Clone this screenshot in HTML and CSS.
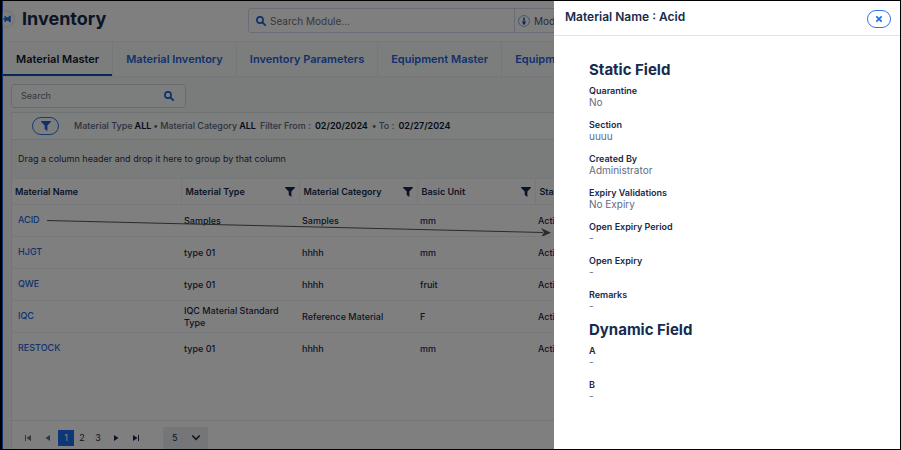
FILE: index.html
```html
<!DOCTYPE html>
<html lang="en">
<head>
<meta charset="utf-8">
<title>Inventory</title>
<link rel="stylesheet" href="styles.css">
</head>
<body>
<svg class="defs" aria-hidden="true">
  <symbol id="funnel" viewBox="0 0 10 10"><path d="M.3 0h9.4q.5.4.1.9L6.400 4.600V10L3.700 8V4.600L.2.9Q-.2.4.3 0z" fill="currentColor"/></symbol>
  <symbol id="search" viewBox="0 0 10 10"><circle cx="4" cy="4" r="3.100" fill="none" stroke="currentColor" stroke-width="1.600"/><path d="M6.400 6.400l2.800 2.800" stroke="currentColor" stroke-width="1.900" stroke-linecap="round"/></symbol>
</svg>
<div class="screen">
  <main class="page">
    <header class="topbar">
      <button class="pin" type="button" aria-label="Pin menu"><svg viewBox="0 0 12 10"><path d="M0 4.400h3V1.400h1.300l.9 1.400h2.600l.7-1.800h2v8h-2l-.7-1.800H5.200l-.9 1.400H3V5.600H0z" fill="currentColor"/></svg></button>
      <h1>Inventory</h1>
      <div class="module-search">
        <label class="module-field"><svg><use href="#search"/></svg><input type="search" placeholder="Search Module..." aria-label="Search Module"></label>
        <button class="module-pick" type="button"><svg viewBox="0 0 12 12"><circle cx="6" cy="6" r="5.400" fill="none" stroke="currentColor" stroke-width=".6" stroke-dasharray="2 .5"/><path d="M5.300 2.500h1.400v2l1 2.500-.8 2.500H5.100L4.300 7l1-2.500z" fill="currentColor"/><path d="M6 5v2" stroke="#fff" stroke-width=".7"/></svg>Module</button>
      </div>
    </header>
    <nav class="tabs">
      <a class="active" href="#master">Material Master</a>
      <a href="#inventory">Material Inventory</a>
      <a href="#parameters">Inventory Parameters</a>
      <a href="#equipment">Equipment Master</a>
      <a href="#equipment-list">Equipment</a>
    </nav>
    <section class="content">
      <label class="search"><input type="search" placeholder="Search" aria-label="Search"><svg><use href="#search"/></svg></label>
      <div class="panel">
        <div class="filters">
          <button class="pill" type="button" aria-label="Filter"><svg><use href="#funnel"/></svg></button>
          <p><span>Material Type</span><b>ALL</b><span>•</span><span>Material Category</span><b>ALL</b><span class="range">Filter From :</span><b class="date">02/20/2024</b><span class="range">•</span><span>To :</span><b class="date">02/27/2024</b></p>
        </div>
        <p class="group">Drag a column header and drop it here to group by that column</p>
        <table>
          <colgroup><col class="c-name"><col class="c-mid"><col class="c-mid"><col class="c-mid"><col></colgroup>
          <thead><tr>
            <th>Material Name</th>
            <th><div>Material Type<svg><use href="#funnel"/></svg></div></th>
            <th><div>Material Category<svg><use href="#funnel"/></svg></div></th>
            <th><div>Basic Unit<svg><use href="#funnel"/></svg></div></th>
            <th>Status</th>
          </tr></thead>
          <tbody>
            <tr><td><a href="#acid">ACID</a></td><td>Samples</td><td>Samples</td><td>mm</td><td>Active</td></tr>
            <tr><td><a href="#hjgt">HJGT</a></td><td>type 01</td><td>hhhh</td><td>mm</td><td>Active</td></tr>
            <tr><td><a href="#qwe">QWE</a></td><td>type 01</td><td>hhhh</td><td>fruit</td><td>Active</td></tr>
            <tr><td><a href="#iqc">IQC</a></td><td>IQC Material Standard Type</td><td>Reference Material</td><td>F</td><td>Active</td></tr>
            <tr><td><a href="#restock">RESTOCK</a></td><td>type 01</td><td>hhhh</td><td>mm</td><td>Active</td></tr>
          </tbody>
        </table>
        <div class="pager">
          <button class="off" type="button" aria-label="First page"><svg viewBox="0 0 8 8"><path d="M1 1h1v6H1zM7 1v6L2.500 4z" fill="currentColor"/></svg></button>
          <button class="off" type="button" aria-label="Previous page"><svg viewBox="0 0 8 8"><path d="M6 1v6L1.500 4z" fill="currentColor"/></svg></button>
          <button class="current" type="button">1</button>
          <button type="button">2</button>
          <button type="button">3</button>
          <button type="button" aria-label="Next page"><svg viewBox="0 0 8 8"><path d="M2 1v6l4.500-3z" fill="currentColor"/></svg></button>
          <button type="button" aria-label="Last page"><svg viewBox="0 0 8 8"><path d="M6 1h1v6H6zM1 1v6l4.500-3z" fill="currentColor"/></svg></button>
          <div class="size"><select aria-label="Rows per page"><option>5</option></select><svg viewBox="0 0 8 6"><path d="M1 1l3 3 3-3" fill="none" stroke="currentColor" stroke-width="1.300"/></svg></div>
        </div>
      </div>
    </section>
  </main>
  <div class="backdrop"></div>
  <svg class="arrow" viewBox="0 0 505 20"><path d="M0 4.500L496 16.500" stroke="currentColor" fill="none"/><path d="M504 16.700L494 12l3 4.500-3 4.500z" fill="currentColor"/></svg>
  <aside class="drawer">
    <header><h2>Material Name : Acid</h2><button class="pill" type="button" aria-label="Close"><svg viewBox="0 0 8 8"><path d="M1.300 1.300l5.400 5.400M6.700 1.300l-5.400 5.400" stroke="currentColor" stroke-width="1.700"/></svg></button></header>
    <div class="details">
      <h3>Static Field</h3>
      <dl>
        <div><dt>Quarantine</dt><dd>No</dd></div>
        <div><dt>Section</dt><dd>uuuu</dd></div>
        <div><dt>Created By</dt><dd>Administrator</dd></div>
        <div><dt>Expiry Validations</dt><dd>No Expiry</dd></div>
        <div><dt>Open Expiry Period</dt><dd>-</dd></div>
        <div><dt>Open Expiry</dt><dd>-</dd></div>
        <div><dt>Remarks</dt><dd>-</dd></div>
      </dl>
      <h3>Dynamic Field</h3>
      <dl>
        <div><dt>A</dt><dd>-</dd></div>
        <div><dt>B</dt><dd>-</dd></div>
      </dl>
    </div>
  </aside>
</div>
</body>
</html>
```
FILE: styles.css
```css
* { box-sizing: border-box; }
body, h1, h2, h3, p, dl, dd { margin: 0; }
body { font: 9px/12px Inter, "Open Sans", sans-serif; color: #172b4d; background: #000; }
button, input, select { font: inherit; color: inherit; padding: 0; border: 0; background: none; }
input { outline: 0; width: 100%; min-width: 0; }
input::placeholder { color: #6b7280; opacity: 1; }
a { color: #2563d9; text-decoration: none; }
svg { display: block; flex: none; width: 10px; height: 10px; }
.defs { position: absolute; width: 0; height: 0; }

.screen { position: relative; height: 100vh; overflow: hidden; border: 1px solid #000; border-left-width: 2px; }
.page { display: flex; flex-direction: column; height: 100%; background: #fff; border-left: 1px solid #1b63d8; }

.topbar { display: flex; flex: none; align-items: center; height: 40px; padding-bottom: 5px; }
.pin { display: flex; align-items: center; width: 10px; height: 14px; border-radius: 0 7px 7px 0; background: #fff; color: #1d6ae5; box-shadow: 0 0 4px #c3c9d6; }
.pin svg { margin-left: -1px; }
h1 { width: 236px; margin-left: 9px; font-size: 18px; line-height: 24px; font-weight: 700; }
.module-search { display: flex; flex: 1; height: 25px; margin: 4px 10px 0 -10px; border: 1px solid #d5daf0; border-radius: 3px; font-size: 10px; }
.module-field { display: flex; align-items: center; width: 265px; padding-left: 7px; gap: 4px; color: #1d5fd6; }
.module-pick { display: flex; align-items: center; gap: 4px; padding-left: 3px; border-left: 1px solid #d5daf0; color: #4c5a78; }
.module-pick svg { width: 12px; height: 12px; color: #1d4f9f; }

.tabs { display: flex; flex: none; height: 36px; background: #f8fbfb; border-top: 1px solid #eef0f2; border-bottom: 1px solid #eceff2; }
.tabs a { display: flex; align-items: center; flex: none; padding: 0 13px; font-size: 11px; font-weight: 600; border-right: 1px solid #eceff2; }
.tabs .active { color: #0e1730; box-shadow: inset 0 -2px #1553b7; }

.content { display: flex; flex: 1; flex-direction: column; gap: 4px; min-height: 0; padding: 7px 0 0 8px; background: #f4f8f8; }
.search { display: flex; flex: none; align-items: center; width: 175px; height: 24px; padding: 0 11px 0 9px; border: 1px solid #d3d8de; border-radius: 3px; color: #1d5fd6; background: #f8fafa; }
.panel { display: flex; flex: 1; flex-direction: column; min-height: 0; border-left: 1px solid #e6eaec; background: #fff; }
.filters { display: flex; flex: none; align-items: center; gap: 15px; height: 28px; padding-left: 20px; background: #fafcfc; border-top: 1px solid #dfe4e6; border-bottom: 1px solid #dfe4e6; }
.filters p { display: flex; gap: 2px; color: #5a6780; font-weight: 500; white-space: nowrap; }
.filters b { color: #0e1730; font-weight: 600; }
.filters .range { margin-left: 2px; }
.filters .date { margin-left: 2px; }
.pill { display: flex; align-items: center; justify-content: center; width: 27px; height: 18px; border: 1px solid #2f76ea; border-radius: 9px; color: #1d63da; }
.group { flex: none; padding: 13px 6px; background: #f4f8f8; color: #2e3442; }

table { width: 100%; table-layout: fixed; border-collapse: collapse; }
.c-name { width: 169px; }
.c-mid { width: 118px; }
th, td { padding: 0 3px; text-align: left; }
th { height: 26px; font-weight: 600; border: solid #eef0f2; border-width: 1px 1px 1px 0; }
th + th { padding-left: 4px; }
th div { display: flex; align-items: center; justify-content: space-between; padding-right: 1px; }
td { height: 32px; font-weight: 500; border-bottom: 1px solid #f1f2f4; }
td:first-child { padding-left: 6px; padding-bottom: 2px; }
tbody tr:last-child td { border-bottom: 0; }

.pager { display: flex; flex: none; align-items: center; height: 29px; margin-top: auto; padding: 6px 0 0 6px; border-top: 1px solid #e7e9ec; }
.pager button { display: flex; align-items: center; justify-content: center; width: 16px; height: 16px; }
.pager .off { color: #667085; }
.pager button:nth-child(-n+2) { width: 20px; }
.pager button:nth-child(n+6) { width: 20px; }
.pager button svg { width: 8px; height: 8px; }
.pager .current { background: #1d6ff0; color: #fff; }
.size { display: flex; align-items: center; width: 45px; height: 22px; margin-left: 17px; padding: 0 7px 0 9px; background: #e9ecef; border-radius: 2px; }
.size select { flex: 1; appearance: none; }

.backdrop { position: absolute; inset: 0; background: rgb(0 0 0 / 50%); }
.arrow { position: absolute; left: 45px; top: 215px; width: 505px; height: 20px; color: #2b2b2b; }

.drawer { position: absolute; top: 0; right: 0; bottom: 0; width: 346px; background: #fff; }
.drawer header { display: flex; align-items: flex-start; justify-content: space-between; height: 35px; padding: 9px 9px 0 11px; border-bottom: 1px solid #e2e4e8; }
h2 { font-size: 12px; line-height: 13px; font-weight: 600; }
.drawer .pill { width: 24px; color: #1d6ff0; }
.drawer .pill svg { width: 8px; height: 8px; }
.details { padding: 25px 35px; }
h3 { font-size: 15px; line-height: 18px; font-weight: 700; }
dl { padding: 6px 0 0; }
dl div { height: 34px; }
dl + h3 { margin-top: -2px; }
dt { line-height: 11px; font-weight: 600; }
dd { font-size: 10px; line-height: 12px; color: #5e6c84; }
```
